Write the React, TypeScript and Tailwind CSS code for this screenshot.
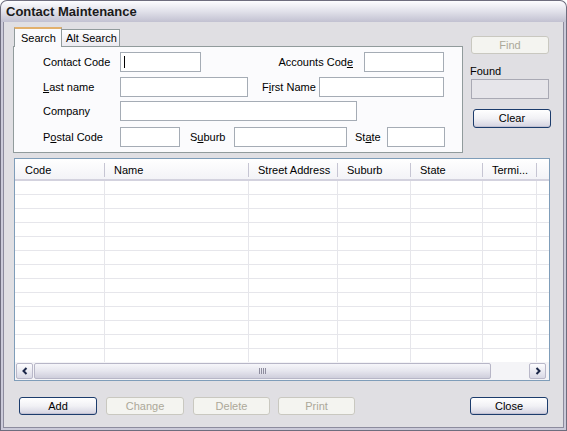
import type { ReactNode } from "react";

const cols = [
  { label: "Code", w: "w-[90px]" },
  { label: "Name", w: "w-[144px]" },
  { label: "Street Address", w: "w-[89px]" },
  { label: "Suburb", w: "w-[73px]" },
  { label: "State", w: "w-[72px]" },
  { label: "Termi...", w: "w-[54px]" },
];

function Btn({ label, className, disabled }: { label: string; className: string; disabled?: boolean }) {
  const look = disabled
    ? "border-[#c9c8c0] bg-[#f4f4f0] text-[#aca899]"
    : "border-[#1c3c6c] bg-gradient-to-b from-white via-[#f1f1f5] to-[#d4d3e0] text-black shadow-[inset_0_-1px_0_#c2c1d2]";
  return (
    <div className={"flex items-center justify-center rounded-[3px] border " + look + " " + className}>
      {label}
    </div>
  );
}

function Field({ className, children }: { className: string; children?: ReactNode }) {
  return <div className={"h-[20px] border border-[#a5acb5] bg-white " + className}>{children}</div>;
}

function Arrow({ dir }: { dir: "left" | "right" }) {
  return (
    <div className="flex h-[16px] w-[17px] items-center justify-center rounded-[2px] border border-[#b9b8c9] bg-gradient-to-b from-[#fdfdff] to-[#d9d9e5]">
      <svg width="8" height="8" viewBox="0 0 8 8">
        <path
          d={dir === "left" ? "M5.5 1 L2.5 4 L5.5 7" : "M2.5 1 L5.5 4 L2.5 7"}
          fill="none"
          stroke="#1b2748"
          strokeWidth="2"
        />
      </svg>
    </div>
  );
}

export default function App() {
  return (
    <div className="flex h-[431px] w-[567px] flex-col font-['Liberation_Sans',Arial,sans-serif] text-[11px] text-black select-none">
      {/* title bar */}
      <div className="flex h-[22px] shrink-0 items-center rounded-t-[7px] border border-b-0 border-[#6e6d7e] bg-gradient-to-b from-[#fdfdff] via-[#e1e1ea] to-[#c2c1d1] pl-[5px]">
        <span className="text-[13px] font-bold text-[#1a1a1a]">Contact Maintenance</span>
      </div>

      <div className="flex min-h-0 flex-1 flex-col border-x border-b border-[#6e6d7e]">
        <div className="flex min-h-0 flex-1 flex-col border-x-2 border-b-2 border-[#cbcad9]">
          <div className="flex min-h-0 flex-1 flex-col border-x border-b border-[#8d8c9e] bg-[#e0dfe3]">
            {/* search area */}
            <div className="flex items-start">
              <div className="ml-[9px] mt-[5px] w-[450px]">
                <div className="relative z-10 flex h-[20px] items-end pl-px">
                  <div className="flex h-[20px] w-[48px] items-center border-x border-t-2 border-[#919b9c] border-t-[#e2b06c] bg-[#fbfbfd] pl-[6px]">
                    Search
                  </div>
                  <div className="mb-px flex h-[17px] w-[58px] items-center border-y-0 border-r border-t border-[#919b9c] bg-gradient-to-b from-white to-[#ebeaf0] pl-[4px]">
                    Alt Search
                  </div>
                </div>
                <div className="-mt-px h-[107px] border border-[#919b9c] bg-[#fbfbfd] pl-[29px] pt-[5px]">
                  <div className="flex items-center">
                    <span className="w-[77px]">Contact Code</span>
                    <Field className="flex w-[81px] items-center pl-[3px]">
                      <span className="h-[12px] w-px bg-black" />
                    </Field>
                    <span className="w-[152px] text-right">
                      Accounts Cod<u>e</u>
                    </span>
                    <Field className="ml-[11px] w-[80px]" />
                  </div>
                  <div className="mt-[5px] flex items-center">
                    <span className="w-[77px]">
                      <u>L</u>ast name
                    </span>
                    <Field className="w-[128px]" />
                    <span className="ml-[14px] w-[57px]">
                      F<u>i</u>rst Name
                    </span>
                    <Field className="w-[125px]" />
                  </div>
                  <div className="mt-[4px] flex items-center">
                    <span className="w-[77px]">Company</span>
                    <Field className="w-[237px]" />
                  </div>
                  <div className="mt-[6px] flex items-center">
                    <span className="w-[77px]">
                      P<u>o</u>stal Code
                    </span>
                    <Field className="w-[60px]" />
                    <span className="ml-[10px] w-[44px]">
                      S<u>u</u>burb
                    </span>
                    <Field className="w-[113px]" />
                    <span className="ml-[8px] w-[32px]">
                      St<u>a</u>te
                    </span>
                    <Field className="w-[58px]" />
                  </div>
                </div>
              </div>

              <div className="ml-[8px] mt-[14px] flex w-[82px] flex-col items-start">
                <Btn label="Find" disabled className="h-[18px] w-[78px]" />
                <span className="-ml-px mt-[11px] h-[13px] leading-[13px]">Found</span>
                <div className="mt-px h-[20px] w-[78px] border border-[#a9a9b4] bg-[#e6e5ea]" />
                <Btn label="Clear" className="ml-[2px] mt-[10px] h-[19px] w-[78px]" />
              </div>
            </div>

            {/* list view */}
            <div className="ml-[10px] mt-[5px] flex h-[223px] w-[536px] flex-col border border-[#7f9db9] bg-white">
              <div className="flex h-[22px] shrink-0 border-b-2 border-[#d3d2de] bg-gradient-to-b from-white to-[#f3f3f7] pt-[2px]">
                {cols.map((c, i) => (
                  <div key={c.label} className={"flex items-center " + c.w}>
                    <span className={"flex-1 " + (i === 0 ? "pl-[10px]" : "pl-[9px]")}>{c.label}</span>
                    <span className="h-[14px] w-px bg-[#c6c5d3]" />
                  </div>
                ))}
              </div>
              <div className="min-h-0 flex-1 overflow-hidden">
                {Array.from({ length: 13 }).map((_, r) => (
                  <div key={r} className="flex h-[14px] border-b border-[#e6e6eb]">
                    {cols.map((c) => (
                      <div key={c.label} className={"border-r border-[#e6e6eb] " + c.w} />
                    ))}
                  </div>
                ))}
              </div>
              <div className="flex h-[18px] shrink-0 items-center bg-[#f4f4f7] pl-px pr-[3px]">
                <Arrow dir="left" />
                <div className="ml-px flex h-[16px] w-[457px] items-center justify-center rounded-[2px] border border-[#b7b6c7] bg-gradient-to-b from-[#f6f6fa] via-[#e6e6ee] to-[#cfcedc]">
                  <div className="flex gap-px">
                    <span className="h-[6px] w-px bg-[#8e8d9e]" />
                    <span className="h-[6px] w-px bg-[#8e8d9e]" />
                    <span className="h-[6px] w-px bg-[#8e8d9e]" />
                    <span className="h-[6px] w-px bg-[#8e8d9e]" />
                  </div>
                </div>
                <div className="flex-1" />
                <Arrow dir="right" />
              </div>
            </div>

            {/* buttons */}
            <div className="mt-[16px] flex">
              <Btn label="Add" className="ml-[15px] h-[18px] w-[78px]" />
              <Btn label="Change" disabled className="ml-[9px] h-[18px] w-[78px]" />
              <Btn label="Delete" disabled className="ml-[9px] h-[18px] w-[77px]" />
              <Btn label="Print" disabled className="ml-[8px] h-[18px] w-[77px]" />
              <Btn label="Close" className="ml-auto mr-[15px] h-[18px] w-[78px]" />
            </div>
          </div>
        </div>
      </div>
    </div>
  );
}
